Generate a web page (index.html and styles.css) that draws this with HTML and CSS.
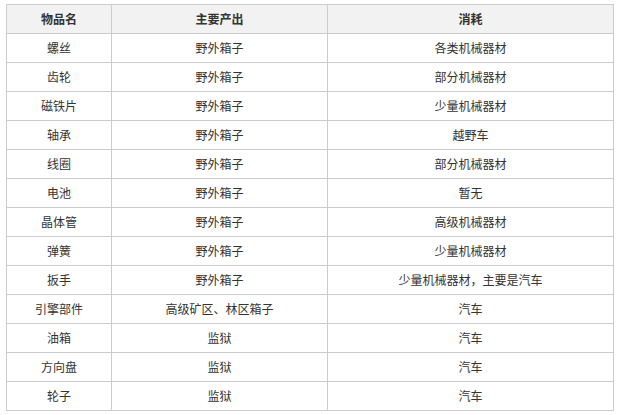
FILE: index.html
```html
<!DOCTYPE html>
<html lang="zh-CN">
<head>
<meta charset="utf-8">
<link rel="stylesheet" href="styles.css">
</head>
<body>
<table class="items">
  <colgroup><col class="c1"><col class="c2"><col class="c3"></colgroup>
  <thead>
    <tr><th>物品名</th><th>主要产出</th><th>消耗</th></tr>
  </thead>
  <tbody>
    <tr><td>螺丝</td><td>野外箱子</td><td>各类机械器材</td></tr>
    <tr><td>齿轮</td><td>野外箱子</td><td>部分机械器材</td></tr>
    <tr><td>磁铁片</td><td>野外箱子</td><td>少量机械器材</td></tr>
    <tr><td>轴承</td><td>野外箱子</td><td>越野车</td></tr>
    <tr><td>线圈</td><td>野外箱子</td><td>部分机械器材</td></tr>
    <tr><td>电池</td><td>野外箱子</td><td>暂无</td></tr>
    <tr><td>晶体管</td><td>野外箱子</td><td>高级机械器材</td></tr>
    <tr><td>弹簧</td><td>野外箱子</td><td>少量机械器材</td></tr>
    <tr><td>扳手</td><td>野外箱子</td><td>少量机械器材，主要是汽车</td></tr>
    <tr><td>引擎部件</td><td>高级矿区、林区箱子</td><td>汽车</td></tr>
    <tr><td>油箱</td><td>监狱</td><td>汽车</td></tr>
    <tr><td>方向盘</td><td>监狱</td><td>汽车</td></tr>
    <tr><td>轮子</td><td>监狱</td><td>汽车</td></tr>
  </tbody>
</table>
</body>
</html>
```
FILE: styles.css
```css
html, body {
  margin: 0;
  background: #fff;
}
body {
  padding: 4px 6px;
  font-family: "Noto Sans CJK SC", "Noto Sans", sans-serif;
  font-size: 12px;
  color: #333;
}
.items {
  border-collapse: collapse;
  width: 607px;
  table-layout: fixed;
}
.c1 { width: 105px; }
.c2 { width: 216px; }
.c3 { width: 286px; }
.items th, .items td {
  border: 1px solid #cccccc;
  height: 28px;
  padding: 0 4px;
  text-align: center;
  vertical-align: middle;
  line-height: 16px;
}
.items th {
  background: #f2f2f2;
  font-weight: bold;
  color: #333;
}
```
